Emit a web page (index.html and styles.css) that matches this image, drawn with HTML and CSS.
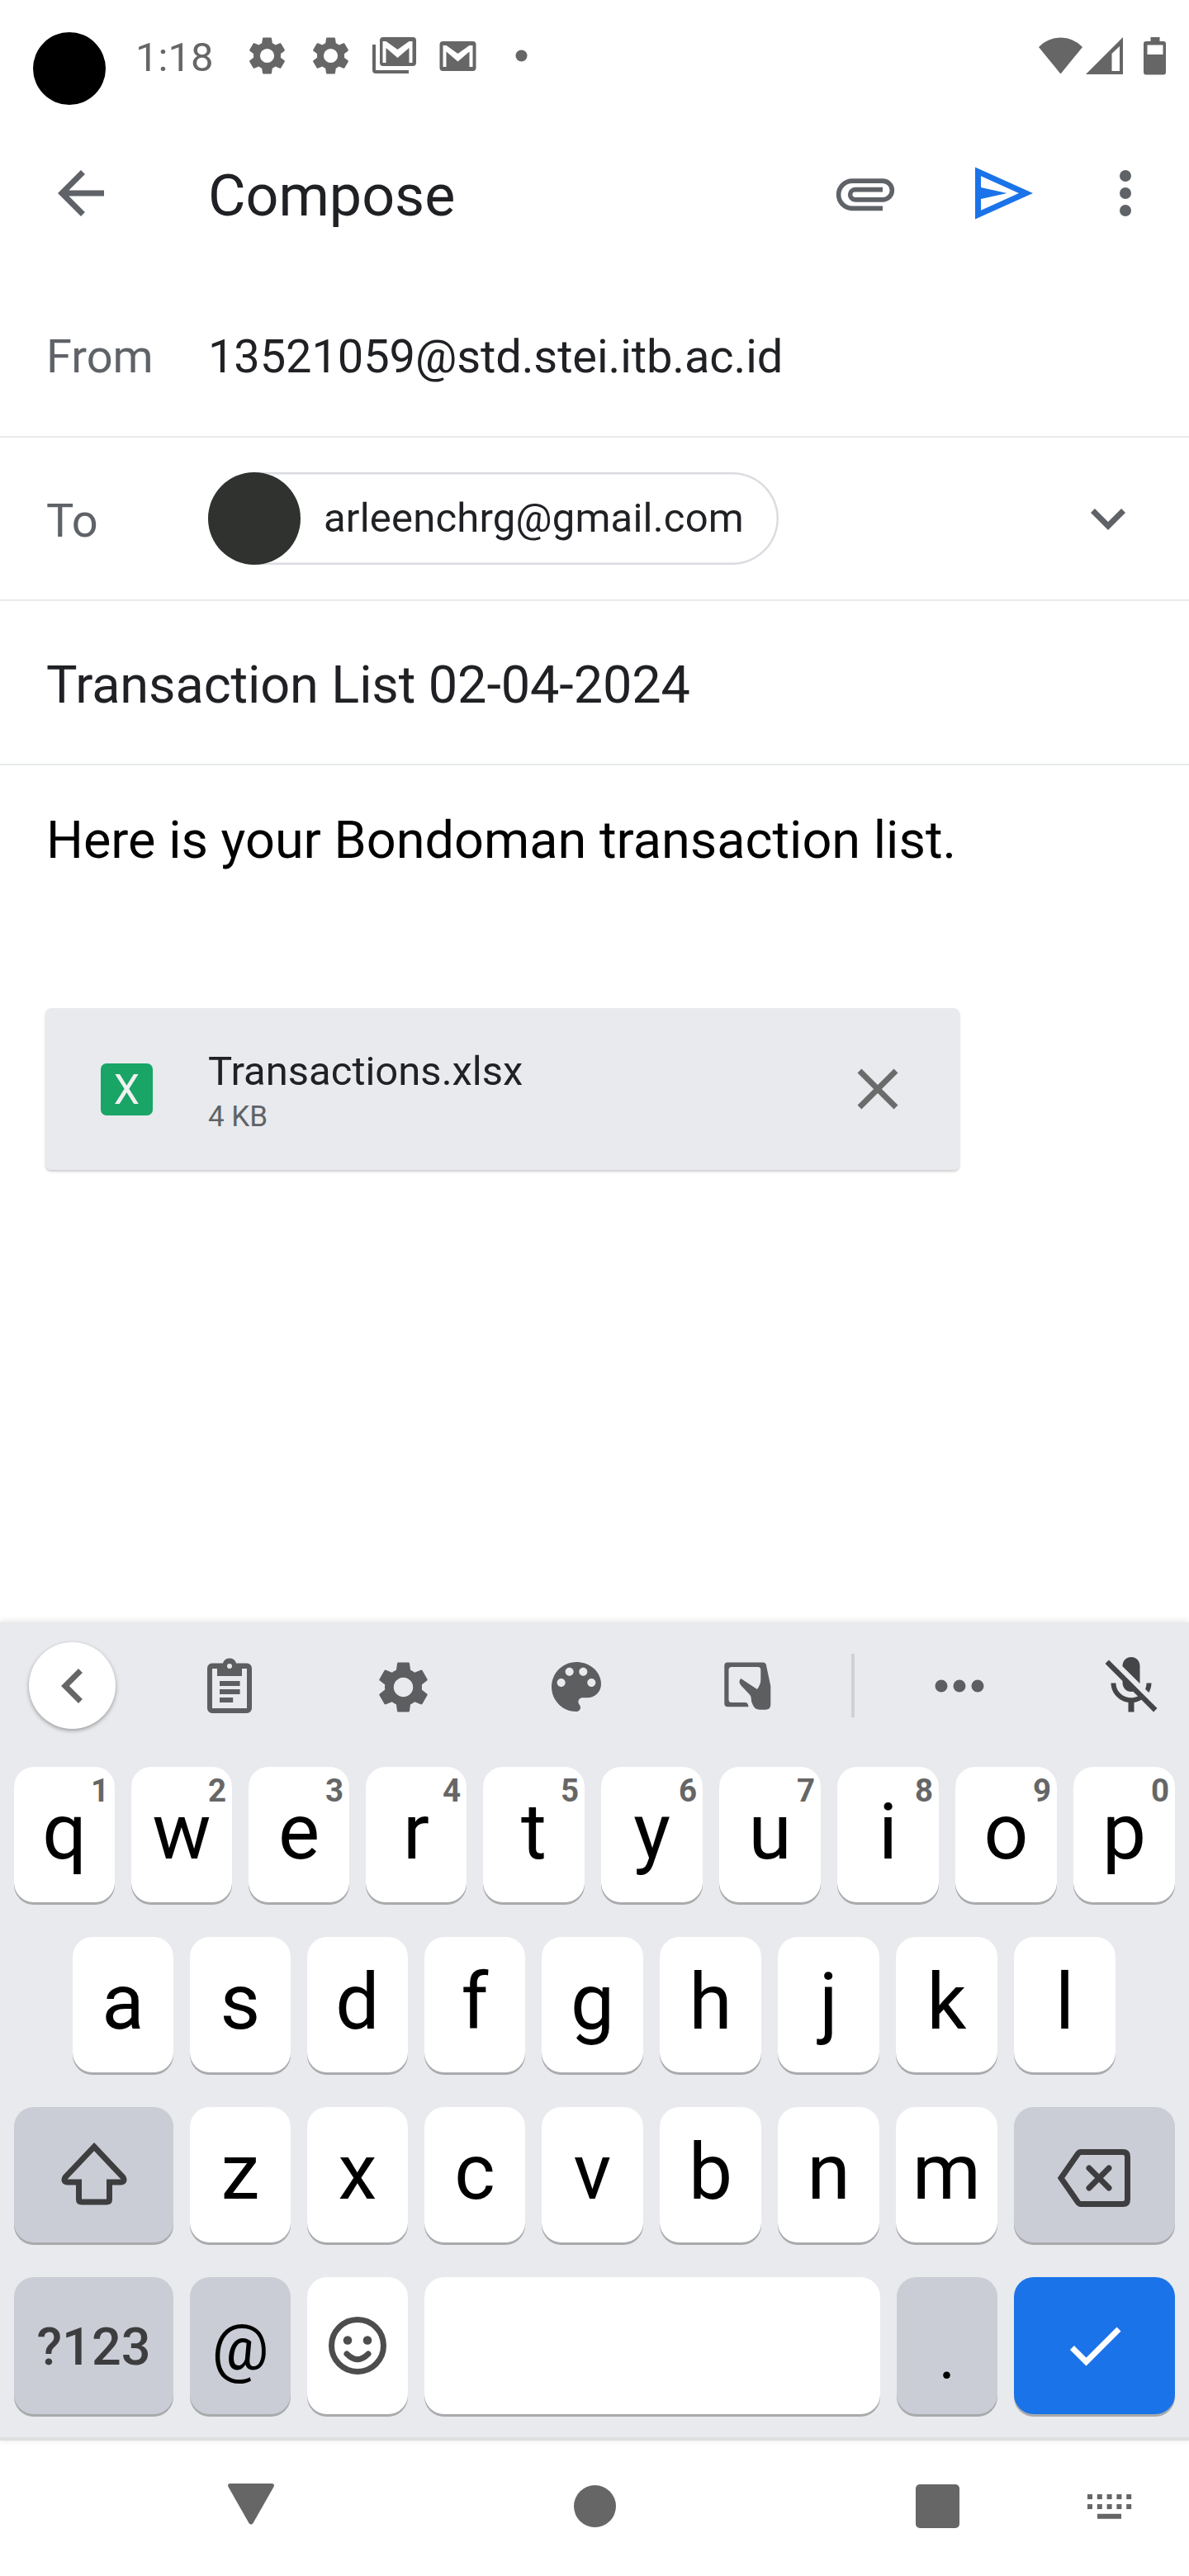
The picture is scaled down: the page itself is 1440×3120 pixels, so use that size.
FILE: index.html
```html
<!DOCTYPE html>
<html lang="en">
<head>
<meta charset="utf-8">
<title>Compose</title>
<link rel="stylesheet" href="styles.css">
</head>
<body>
<svg class="defs" aria-hidden="true">
  <symbol id="gear" viewBox="0 0 24 24"><path d="M19.14 12.94c.04-.3.06-.61.06-.94 0-.32-.02-.64-.07-.94l2.03-1.58c.18-.14.23-.41.12-.61l-1.92-3.32c-.12-.22-.37-.29-.59-.22l-2.39.96c-.5-.38-1.03-.7-1.62-.94l-.36-2.54c-.04-.24-.24-.41-.48-.41h-3.84c-.24 0-.43.17-.47.41l-.36 2.54c-.59.24-1.13.57-1.62.94l-2.39-.96c-.22-.08-.47 0-.59.22L2.74 8.87c-.12.21-.08.47.12.61l2.03 1.58c-.05.3-.09.63-.09.94s.02.64.07.94l-2.03 1.58c-.18.14-.23.41-.12.61l1.92 3.32c.12.22.37.29.59.22l2.39-.96c.5.38 1.03.7 1.62.94l.36 2.54c.05.24.24.41.48.41h3.84c.24 0 .44-.17.47-.41l.36-2.54c.59-.24 1.13-.56 1.62-.94l2.39.96c.22.08.47 0 .59-.22l1.92-3.32c.12-.22.07-.47-.12-.61l-2.01-1.58zM12 15.75a3.75 3.75 0 1 1 0-7.5a3.75 3.75 0 0 1 0 7.5z"/></symbol>
</svg>
<div class="phone">
  <header class="status">
    <span class="camera"></span>
    <span class="clock">1:18</span>
    <div class="notifications">
      <svg class="n-icon"><use href="#gear"/></svg>
      <svg class="n-icon"><use href="#gear"/></svg>
      <svg class="n-icon" viewBox="0 0 55 55"><path fill-rule="evenodd" d="M14 5h36q4 0 4 4v27q0 4-4 4H14q-4 0-4-4V9q0-4 4-4zM13.500 10v26h4V18L31.500 30L45.500 18v18h4V10h-4L31.500 20L17.500 10z"/><path d="M1 14h4v31h40v4H5q-4 0-4-4z"/></svg>
      <svg class="n-icon" viewBox="0 0 55 55"><path fill-rule="evenodd" d="M9.500 10h36q4 0 4 4v28q0 4-4 4h-36q-4 0-4-4V14q0-4 4-4zM9.500 15v26h4V22.500L27.500 34.500L41.500 22.500V41h4V15h-4L27.500 25L13.500 15z"/></svg>
      <svg class="n-icon" viewBox="0 0 55 55"><circle cx="27.500" cy="27.500" r="7"/></svg>
    </div>
    <svg class="system" viewBox="0 0 156 46"><path d="M0 12Q11 .5 26.500.5T53 12L26.500 44.500z"/><path fill-rule="evenodd" d="M57 45L102 0v45zM88.500 20v21h9.500V11z"/><path fill-rule="evenodd" d="M135.500 0h11v5h4.500q3 0 3 3v34.500q0 3-3 3h-21q-3 0-3-3V8q0-3 3-3h5.500zM131.500 9.500v11.500h19V9.500z"/></svg>
  </header>

  <nav class="toolbar">
    <svg class="icon" viewBox="0 0 24 24"><path d="M20 11H7.830l5.590-5.590L12 4l-8 8 8 8 1.410-1.410L7.830 13H20z"/></svg>
    <h1 class="title">Compose</h1>
    <svg class="icon" viewBox="0 0 24 24"><path fill="none" stroke="#5f6368" stroke-width="1.600" d="M18 17.250H7.500a4.750 4.750 0 0 1 0-9.500H18a3.250 3.250 0 0 1 0 6.500H8.500a1.750 1.750 0 0 1 0-3.500H18"/></svg>
    <svg class="icon send" viewBox="0 0 24 24"><path fill-rule="evenodd" d="M2 3v18l20-9zM4 14l9-2-9-2V6.090L17.130 12 4 17.910z"/></svg>
    <svg class="icon more" viewBox="0 0 24 24"><circle cx="12" cy="6" r="2"/><circle cx="12" cy="12" r="2"/><circle cx="12" cy="18" r="2"/></svg>
  </nav>

  <main class="message">
    <div class="field from"><span class="label">From</span><span class="address">13521059@std.stei.itb.ac.id</span></div>
    <div class="field to">
      <span class="label">To</span>
      <span class="chip"><span class="avatar"></span><span class="chip-text">arleenchrg@gmail.com</span></span>
      <svg class="icon expand" viewBox="0 0 24 24"><path d="M16.590 8.590L12 13.170 7.410 8.590 6 10l6 6 6-6z"/></svg>
    </div>
    <div class="field subject">Transaction List 02-04-2024</div>
    <p class="body">Here is your Bondoman transaction list.</p>
    <div class="attachment">
      <span class="filetype">X</span>
      <div class="file"><span class="filename">Transactions.xlsx</span><span class="size">4 KB</span></div>
      <svg class="icon close" viewBox="0 0 24 24"><path d="M19 6.410L17.590 5 12 10.590 6.410 5 5 6.410 10.590 12 5 17.590 6.410 19 12 13.410 17.590 19 19 17.590 13.410 12z"/></svg>
    </div>
  </main>

  <section class="keyboard">
    <div class="tools">
      <span class="back"><svg class="icon" viewBox="0 0 24 24"><path d="M15.410 7.410L14 6l-6 6 6 6 1.410-1.410L10.830 12z"/></svg></span>
      <svg class="tool clipboard" viewBox="0 0 24 24"><path fill-rule="evenodd" d="M5 2.800h4.300a2.850 2.850 0 0 1 5.400 0H19a2 2 0 0 1 2 2V21a2 2 0 0 1-2 2H5a2 2 0 0 1-2-2V4.800a2 2 0 0 1 2-2zM5 5v16h14V5h-2v3H7V5zM12 3a1 1 0 1 0 0 2a1 1 0 0 0 0-2z"/><path d="M8 10h8.200v2H8zM8 13.300h8.200v2H8zM8 16.700h5.400v2H8z"/></svg>
      <svg class="tool settings"><use href="#gear"/></svg>
      <svg class="tool palette" viewBox="0 0 24 24"><path d="M12 3c-4.970 0-9 4.030-9 9s4.030 9 9 9c.83 0 1.500-.67 1.500-1.500 0-.39-.15-.74-.39-1.010-.23-.26-.38-.61-.38-.99 0-.83.67-1.500 1.500-1.500H16c2.760 0 5-2.240 5-5 0-4.420-4.030-8-9-8zm-5.500 9c-.83 0-1.500-.67-1.500-1.500S5.670 9 6.500 9 8 9.670 8 10.500 7.330 12 6.500 12zm3-4C8.670 8 8 7.330 8 6.500S8.670 5 9.500 5s1.500.67 1.500 1.500S10.330 8 9.500 8zm5 0c-.83 0-1.500-.67-1.500-1.500S13.670 5 14.500 5s1.500.67 1.500 1.500S15.330 8 14.500 8zm3 4c-.83 0-1.500-.67-1.500-1.500S16.670 9 17.500 9s1.500.67 1.500 1.500-.67 1.500-1.500 1.500z"/></svg>
      <svg class="tool hand" viewBox="0 0 57 58"><path fill-rule="evenodd" d="M4 .5H47Q50.500 .5 51 4L56.300 29V51.500Q56.300 57.700 50 57.700H43Q37.500 57.700 35 52.500Q32.500 48 32.500 42.500Q32 40.500 30.500 39L20.500 28.500Q16.500 24 20.300 20L40 33Q44.300 27 44.300 22V9.500Q44.300 6 41 6H9Q5.500 6 5.500 9.500V45.500Q5.500 49 9 49H26Q29 49.500 29.500 54.300H4.500Q.3 54.300 .3 50V4.500Q.3 .5 4 .5z"/></svg>
      <span class="rule"></span>
      <svg class="tool dots" viewBox="0 0 60 16"><circle cx="8" cy="8" r="7.500"/><circle cx="30" cy="8" r="7.500"/><circle cx="52" cy="8" r="7.500"/></svg>
      <svg class="tool mic" viewBox="0 0 24 24"><path d="M19 11h-1.700c0 .74-.16 1.430-.43 2.050l1.230 1.230c.56-.98.9-2.090.9-3.280zm-4.020.17c0-.06.02-.11.02-.17V5c0-1.660-1.340-3-3-3S9 3.340 9 5v.18l5.980 5.990zM4.270 3L3 4.270l6.010 6.010V11c0 1.660 1.330 3 2.990 3 .22 0 .44-.03.65-.08l1.660 1.660c-.71.33-1.500.52-2.310.52-2.760 0-5.300-2.100-5.300-5.100H5c0 3.410 2.720 6.230 6 6.720V21h2v-3.280c.91-.13 1.770-.45 2.540-.9L19.730 21 21 19.730 4.270 3z"/></svg>
    </div>
    <div class="row">
      <span class="key">q<sup>1</sup></span><span class="key">w<sup>2</sup></span><span class="key">e<sup>3</sup></span><span class="key">r<sup>4</sup></span><span class="key">t<sup>5</sup></span><span class="key">y<sup>6</sup></span><span class="key">u<sup>7</sup></span><span class="key">i<sup>8</sup></span><span class="key">o<sup>9</sup></span><span class="key">p<sup>0</sup></span>
    </div>
    <div class="row home">
      <span class="key">a</span><span class="key">s</span><span class="key">d</span><span class="key">f</span><span class="key">g</span><span class="key">h</span><span class="key">j</span><span class="key">k</span><span class="key">l</span>
    </div>
    <div class="row">
      <span class="key wide mod"><svg class="shift" viewBox="0 0 80 76"><path d="M40 5L75 42Q78 48 72 48H58.500V69Q58.500 72 55 72H25Q21.500 72 21.500 69V48H8Q2 48 5 42z"/></svg></span><span class="key">z</span><span class="key">x</span><span class="key">c</span><span class="key">v</span><span class="key">b</span><span class="key">n</span><span class="key">m</span><span class="key wide-end mod"><svg class="delete" viewBox="0 0 88 70"><path d="M4 35L24.500 5.500Q26 3.500 28 3.500H79Q84.500 3.500 84.500 9V61Q84.500 66.500 79 66.500H28Q26 66.500 24.500 64.500zM38 23L62 47M62 23L38 47"/></svg></span>
    </div>
    <div class="row last">
      <span class="key wide mod symbols">?123</span><span class="key mod at">@</span><span class="key"><svg class="smile" viewBox="0 0 70 70"><circle cx="35" cy="35" r="31.500"/><path d="M22 45Q35 58 48 45"/><circle class="eye" cx="23" cy="28.500" r="5.300"/><circle class="eye" cx="47" cy="28.500" r="5.300"/></svg></span><span class="key space"></span><span class="key mod dot">.</span><span class="key wide-end enter"><svg class="icon" viewBox="0 0 24 24"><path d="M9 16.170L4.830 12l-1.420 1.410L9 19 21 7l-1.410-1.410z"/></svg></span>
    </div>
  </section>

  <footer class="nav">
    <svg class="nav-back" viewBox="0 0 56 50"><path d="M3 0H53Q57 0 55.500 4L30.500 48Q28 51 25.500 48L.5 4Q-1 0 3 0z"/></svg>
    <span class="nav-home"></span>
    <span class="nav-recent"></span>
    <svg class="nav-ime" viewBox="0 0 54 30"><path d="M0 0h6v6H0zM11.800 0h6v6h-6zM23.600 0h6v6h-6zM35.400 0h6v6h-6zM47.200 0h6v6h-6zM0 12h6v6H0zM11.800 12h6v6h-6zM23.600 12h6v6h-6zM35.400 12h6v6h-6zM47.200 12h6v6h-6zM12 23.700h29v6H12z"/></svg>
  </footer>
</div>
</body>
</html>
```
FILE: styles.css
```css
* { box-sizing: border-box; }
body { margin: 0; background: #fff; font-family: Roboto, "Liberation Sans", sans-serif; color: #202124; }
svg { display: block; flex: none; fill: currentColor; overflow: visible; }
.defs { position: absolute; width: 0; height: 0; }
.phone { width: 1440px; height: 3120px; display: flex; flex-direction: column; background: #fff; }
.icon { width: 84px; height: 84px; color: #5f6368; }

.status { height: 136px; display: flex; align-items: flex-start; padding: 39px 26px 0 40px; color: #666; }
.camera { width: 88px; height: 88px; border-radius: 50%; background: #000; }
.clock { width: 132px; margin: 0 0 0 36px; font-size: 49px; line-height: 62px; }
.notifications { display: flex; gap: 22px; padding-top: 1px; }
.n-icon { width: 55px; height: 55px; }
.system { width: 156px; height: 46px; margin: 6px 0 0 auto; }

.toolbar { height: 196px; display: flex; align-items: center; padding: 0 35px 0 56px; }
.title { flex: 1; margin: 0 0 0 112px; font-size: 70px; font-weight: 400; line-height: 84px; padding-top: 5px; }
.send { color: #1a73e8; margin-left: 84px; }
.more { margin-left: 63px; }

.message { height: 1633px; }
.field { display: flex; align-items: center; padding: 0 56px; border-bottom: 2px solid #e8eaed; font-size: 56px; }
.from { height: 198px; padding-top: 4px; }
.address { letter-spacing: -.1px; }
.to { height: 198px; }
.label { width: 196px; color: #5f6368; }
.to .label { padding-top: 5px; }
.chip { display: flex; align-items: center; width: 691px; height: 112px; border-radius: 56px; box-shadow: inset 0 0 0 2.500px #dadce0; }
.avatar { width: 112px; height: 112px; border-radius: 50%; background: #30322f; }
.chip-text { margin-left: 28px; font-size: 49px; letter-spacing: .2px; padding-bottom: 2px; }
.expand { margin-left: auto; }
.subject { height: 199px; font-size: 63px; padding-top: 5px; letter-spacing: -.1px; }
.body { margin: 54px 56px 0; font-size: 63px; line-height: 74px; color: #000; }
.attachment { display: flex; align-items: center; width: 1107px; height: 196px; margin: 166px 0 0 55px; padding: 0 57px 0 67px; background: #e8eaed; border-radius: 7px; box-shadow: 0 2px 3px rgba(0,0,0,.2); }
.filetype { width: 63px; height: 63px; border-radius: 7px; background: #18a566; color: #f1f1f1; font-size: 50px; line-height: 64px; text-align: center; }
.file { flex: 1; margin-left: 67px; padding-top: 8px; display: flex; flex-direction: column; }
.filename { font-size: 49px; line-height: 60px; }
.size { font-size: 35px; line-height: 50px; color: #5f6368; }
.close { color: #6b6b6b; }

.keyboard { height: 991px; background: #e8eaed; border-bottom: 4px solid #e0e0e0; padding: 24px 17px 0; box-shadow: 0 -1px 8px rgba(0,0,0,.12); }
.tools { height: 105px; margin-bottom: 46px; display: flex; align-items: center; padding-left: 18px; color: #5d5e60; }
.back { width: 105px; height: 105px; border-radius: 50%; background: #fff; display: grid; place-items: center; box-shadow: 0 2px 5px rgba(0,0,0,.35); }
.back .icon { color: #666; }
.clipboard { width: 72px; height: 72px; margin-left: 102px; }
.settings { width: 75px; height: 75px; margin: 3px 0 0 137px; }
.palette { width: 80px; height: 80px; margin: 3px 0 0 132px; }
.hand { width: 57px; height: 58px; margin-left: 139px; }
.rule { width: 4px; height: 77px; margin-left: 97px; background: #cfd1d6; }
.dots { width: 60px; height: 16px; margin-left: 97px; }
.mic { width: 84px; height: 84px; margin-left: 136px; color: #444546; }

.row { display: flex; gap: 20px; height: 164px; margin-bottom: 42px; }
.home { padding: 0 71px; }
.last { height: 166px; margin-bottom: 0; }
.key { position: relative; flex: none; width: 123px; display: flex; align-items: center; justify-content: center; padding-bottom: 6px; border-radius: 24px; background: #fff; box-shadow: 0 3px 0 #a9aaac; color: #000; font-size: 94.500px; line-height: 100px; }
.key:nth-child(-n+4) { width: 122px; }
.key sup { position: absolute; top: 6px; right: 7px; font-size: 38.500px; font-weight: 700; line-height: 46px; color: #666; }
.row .wide { width: 193px; }
.row .wide-end { width: 195px; }
.row .space { width: 552px; }
.row .dot { width: 122px; }
.mod { background: #cbcdd6; }
.symbols { font-size: 63px; font-weight: 500; color: #3d3d3f; padding: 4px 0 0; }
.at { font-size: 77px; padding: 5px 0 0; }
.dot { font-size: 77px; padding: 27px 0 0; }
.enter { background: #1a73e8; padding: 0; }
.enter .icon { color: #fff; }
.shift { width: 80px; height: 76px; margin-top: 4px; }
.delete { width: 88px; height: 70px; margin: 14px 0 0 -2px; }
.shift, .delete { fill: none; stroke: #3e3e40; stroke-width: 7px; stroke-linecap: round; }
.smile { width: 70px; height: 70px; margin-top: 6px; fill: none; stroke: #4d4d4d; stroke-width: 7px; stroke-linecap: round; }
.eye { fill: #4d4d4d; stroke: none; }

.nav { flex: 1; display: flex; align-items: flex-start; color: #666; padding: 52px 0 0 276px; }
.nav-back { width: 56px; height: 50px; }
.nav-home { width: 51px; height: 51px; border-radius: 50%; background: #666; margin: 2px 0 0 363px; }
.nav-recent { width: 53px; height: 53px; border-radius: 5px; background: #666; margin: 1px 0 0 363px; }
.nav-ime { width: 54px; height: 30px; margin: 13px 0 0 155px; }
```
